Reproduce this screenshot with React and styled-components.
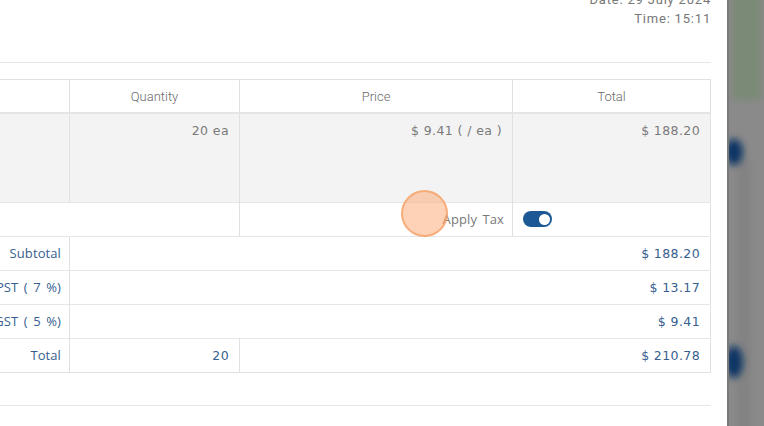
import React from "react";
import styled, { createGlobalStyle } from "styled-components";

const GlobalStyle = createGlobalStyle`
  html, body {
    margin: 0;
    padding: 0;
    background: #ffffff;
    overflow: hidden;
  }
  #root {
    height: 426px;
  }
`;

const Screen = styled.div`
  display: flex;
  width: 764px;
  height: 426px;
  overflow: hidden;
`;

const Panel = styled.div`
  position: relative;
  width: 727px;
  flex: none;
  background: #ffffff;
  overflow: hidden;
  display: flex;
  flex-direction: column;
  align-items: flex-end;
  padding-right: 16px;
  box-sizing: border-box;
`;

const Meta = styled.div`
  margin-top: -10px;
  text-align: right;
  font-family: Roboto, "Liberation Sans", sans-serif;
  font-weight: 400;
  font-size: 13px;
  letter-spacing: 0.8px;
  line-height: 19px;
  color: #777777;
`;

const Rule = styled.div`
  width: 727px;
  flex: none;
  height: 1px;
  background: #e6e6e6;
  margin-top: ${(p) => p.$top}px;
`;

const Table = styled.table`
  flex: none;
  margin-top: 16px;
  border-collapse: collapse;
  table-layout: fixed;
  width: 841px;
  border: 1px solid #e1e1e1;
`;

const Th = styled.th`
  height: 32px;
  padding: 0 10px;
  font-family: Roboto, "Liberation Sans", sans-serif;
  font-weight: 300;
  font-size: 13px;
  color: #6a6a6a;
  text-align: center;
  border-left: 1px solid #e1e1e1;
  border-bottom: 2px solid #e4e4e4;
`;

const Row = styled.tr`
  background: ${(p) => (p.$shaded ? "#f3f3f3" : "#ffffff")};
`;

const Td = styled.td`
  height: ${(p) => p.$h || 34}px;
  padding: ${(p) => (p.$top ? "9px 10px 0" : p.$label ? "0 8px 0 10px" : "0 10px")};
  vertical-align: ${(p) => (p.$top ? "top" : "middle")};
  text-align: ${(p) => p.$align || "right"};
  border-left: 1px solid #e1e1e1;
  border-top: 1px solid #e6e6e6;
  box-sizing: border-box;
  font-family: ${(p) =>
    p.$label ? '"Open Sans", "Noto Sans", sans-serif' : '"DejaVu Sans", Verdana, sans-serif'};
  font-size: ${(p) => (p.$label ? 13 : 12.5)}px;
  letter-spacing: ${(p) => (p.$label ? 0.1 : 0.4)}px;
  word-spacing: ${(p) => (p.$label ? 2 : 0)}px;
  color: ${(p) => (p.$blue ? "#36608f" : "#7a7a7a")};
  white-space: nowrap;
`;

const Toggle = styled.span`
  display: inline-flex;
  align-items: center;
  justify-content: flex-end;
  width: 29px;
  height: 16px;
  padding: 0 2px;
  box-sizing: border-box;
  border-radius: 8px;
  background: #1c5894;
  vertical-align: middle;

  &::after {
    content: "";
    width: 11px;
    height: 11px;
    border-radius: 50%;
    background: #ffffff;
  }
`;

const ClickMark = styled.div`
  position: absolute;
  left: 401px;
  top: 190px;
  width: 47px;
  height: 47px;
  border-radius: 50%;
  box-sizing: border-box;
  background: rgba(252, 166, 112, 0.5);
  border: 2px solid rgba(246, 160, 100, 0.75);
  pointer-events: none;
`;

const Backdrop = styled.div`
  flex: 1;
  background: #8a8a8a;
  border-left: 2px solid #7a7a7a;

  svg {
    display: block;
  }
`;

export default function App() {
  return (
    <>
      <GlobalStyle />
      <Screen>
        <Panel>
          <Meta>
            <div>Date: 29 July 2024</div>
            <div>Time: 15:11</div>
          </Meta>
          <Rule $top={34} />
          <Table>
            <colgroup>
              <col style={{ width: 200 }} />
              <col style={{ width: 170 }} />
              <col style={{ width: 273 }} />
              <col style={{ width: 198 }} />
            </colgroup>
            <thead>
              <tr>
                <Th>Item</Th>
                <Th>Quantity</Th>
                <Th>Price</Th>
                <Th>Total</Th>
              </tr>
            </thead>
            <tbody>
              <Row $shaded>
                <Td $top $h={89} $align="left"></Td>
                <Td $top $h={89}>20 ea</Td>
                <Td $top $h={89}>$ 9.41 ( / ea )</Td>
                <Td $top $h={89}>$ 188.20</Td>
              </Row>
              <Row>
                <Td colSpan={2}></Td>
                <Td $label>Apply Tax</Td>
                <Td $align="left">
                  <Toggle />
                </Td>
              </Row>
              <Row>
                <Td $label $blue>Subtotal</Td>
                <Td colSpan={3} $blue>$ 188.20</Td>
              </Row>
              <Row>
                <Td $label $blue>PST ( 7 %)</Td>
                <Td colSpan={3} $blue>$ 13.17</Td>
              </Row>
              <Row>
                <Td $label $blue>GST ( 5 %)</Td>
                <Td colSpan={3} $blue>$ 9.41</Td>
              </Row>
              <Row>
                <Td $label $blue>Total</Td>
                <Td $blue>20</Td>
                <Td colSpan={2} $blue>$ 210.78</Td>
              </Row>
            </tbody>
          </Table>
          <Rule $top={32} />
          <ClickMark />
        </Panel>
        <Backdrop>
          <svg width="35" height="426" viewBox="0 0 35 426">
            <defs>
              <filter id="soft" x="-100%" y="-50%" width="300%" height="200%">
                <feGaussianBlur stdDeviation="3.5" />
              </filter>
            </defs>
            <rect x="4" y="-10" width="28" height="110" fill="#768a6f" opacity="0.75" filter="url(#soft)" />
            <rect x="8" y="160" width="14" height="470" fill="#7e7e7e" opacity="0.6" filter="url(#soft)" />
            <ellipse cx="5" cy="152" rx="9" ry="13" fill="#0a3665" filter="url(#soft)" />
            <ellipse cx="5" cy="362" rx="9" ry="16" fill="#0a3665" filter="url(#soft)" />
          </svg>
        </Backdrop>
      </Screen>
    </>
  );
}
